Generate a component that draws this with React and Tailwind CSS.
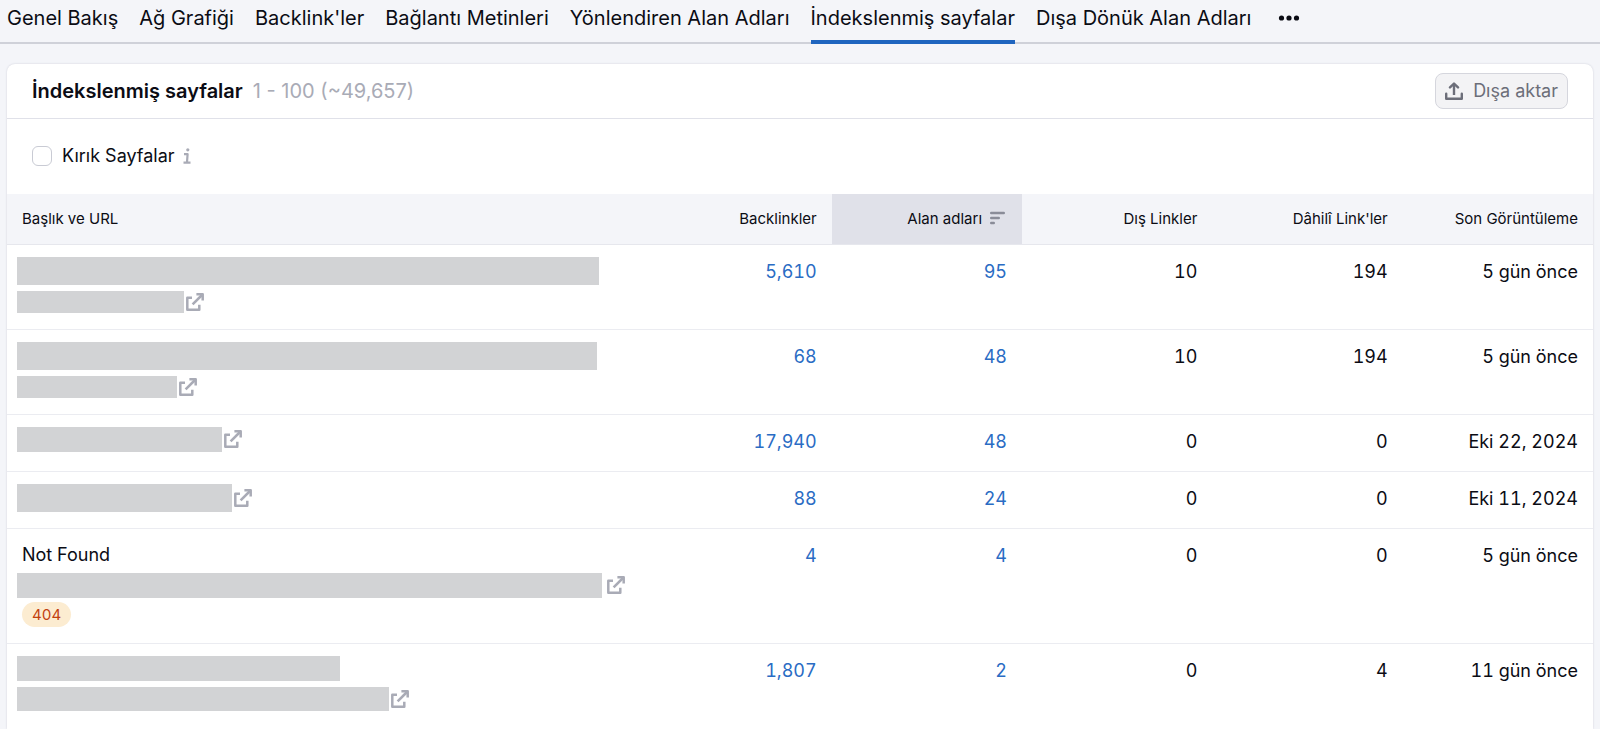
import React from 'react';

const TABS = [
  'Genel Bakış',
  'Ağ Grafiği',
  "Backlink'ler",
  'Bağlantı Metinleri',
  'Yönlendiren Alan Adları',
  'İndekslenmiş sayfalar',
  'Dışa Dönük Alan Adları',
];

const ACTIVE_TAB = 'İndekslenmiş sayfalar';

// title / url hold the size classes of the masked text blocks
const ROWS = [
  { id: 1, title: 'w-[582px] h-7', url: 'w-[167px] h-[22px]', backlinks: '5,610', domains: '95', external: '10', internal: '194', seen: '5 gün önce' },
  { id: 2, title: 'w-[580px] h-7', url: 'w-[160px] h-[22px]', backlinks: '68', domains: '48', external: '10', internal: '194', seen: '5 gün önce' },
  { id: 3, url: 'w-[205px] h-[25px]', backlinks: '17,940', domains: '48', external: '0', internal: '0', seen: 'Eki 22, 2024' },
  { id: 4, url: 'w-[215px] h-7', backlinks: '88', domains: '24', external: '0', internal: '0', seen: 'Eki 11, 2024' },
  { id: 5, name: 'Not Found', url: 'w-[585px] h-[25px] mr-[3px]', status: '404', backlinks: '4', domains: '4', external: '0', internal: '0', seen: '5 gün önce' },
  { id: 6, title: 'w-[323px] h-[25px]', url: 'w-[372px] h-6', backlinks: '1,807', domains: '2', external: '0', internal: '4', seen: '11 gün önce' },
];

function ExternalIcon() {
  return (
    <svg width="18" height="18" viewBox="0 0 18 18" fill="none" stroke="#a9abb6" strokeWidth="2.5">
      <path d="M6 4.7H1.3v12h12v-4.9" strokeLinejoin="round" />
      <path d="M10.4 1.3h6.3v6.3" strokeLinejoin="round" />
      <path d="M16 2 6.6 11.4" />
    </svg>
  );
}

function ExportIcon() {
  return (
    <svg width="18" height="18" viewBox="0 0 18 18" fill="none" stroke="#6c6e79" strokeWidth="2.4">
      <path d="M1.2 11.8v4.9h15.6v-4.9" strokeLinejoin="round" strokeLinecap="round" />
      <path d="M9 13V2" />
      <path d="M5 5.4 9 1.6l4 3.8" strokeLinejoin="round" strokeLinecap="round" />
    </svg>
  );
}

function SortIcon() {
  return (
    <svg width="17" height="16" viewBox="0 0 17 16" stroke="#8a8c98" strokeWidth="2.4" strokeLinecap="round">
      <path d="M1.2 2h12.6M1.2 7h7.6M1.2 12h2.6" />
    </svg>
  );
}

function InfoIcon() {
  return (
    <svg width="8" height="16" viewBox="0 0 8 16" fill="none" stroke="#a9abb6" strokeWidth="2.2">
      <path d="M1 6.2h3.6L4 14.2M.5 14.6h7" strokeLinejoin="round" />
      <circle cx="4.8" cy="1.8" r="1.6" fill="#a9abb6" stroke="none" />
    </svg>
  );
}

function PageCell({ row }) {
  return (
    <div className={`flex flex-col items-start ${row.name ? 'gap-1' : 'gap-1.5'}`}>
      {row.title && <div className={`bg-[#d2d3d5] ${row.title}`} />}
      {row.name && <div className="pl-[5px] leading-7">{row.name}</div>}
      <div className="flex items-center gap-0.5">
        <div className={`bg-[#d2d3d5] ${row.url}`} />
        <a href="#" aria-label="Sayfayı aç">
          <ExternalIcon />
        </a>
      </div>
      {row.status && (
        <span className="ml-[5px] rounded-full bg-[#fcecd1] px-2.5 text-[15px] leading-[25px] text-[#c2410f]">
          {row.status}
        </span>
      )}
    </div>
  );
}

export default function App() {
  return (
    <div className="flex h-screen flex-col overflow-hidden bg-[#f4f5f9] font-['Inter',sans-serif] text-[#0b0c14]">
      <nav className="flex shrink-0 gap-[21px] border-b-2 border-[#cfd1d9] pl-[7px] text-xl">
        {TABS.map((tab) => (
          <a
            key={tab}
            href="#"
            className={`-mb-0.5 whitespace-nowrap border-b-4 pt-1 pb-2 leading-7 ${
              tab === ACTIVE_TAB ? 'border-[#1f65bf]' : 'border-transparent'
            }`}
          >
            {tab}
          </a>
        ))}
        <button aria-label="Diğer" className="ml-1.5 flex h-9 items-center">
          <svg width="22" height="6" viewBox="0 0 22 6" fill="#0b0c14">
            <circle cx="3.5" cy="3" r="2.6" />
            <circle cx="11" cy="3" r="2.6" />
            <circle cx="18.5" cy="3" r="2.6" />
          </svg>
        </button>
      </nav>

      <section className="mx-[7px] mt-5 flex-1 rounded-t-lg bg-white shadow-[0_0_2px_#c9cbd6]">
        <header className="flex items-center justify-between border-b border-[#e0e1e9] px-[25px] py-[9px]">
          <h2 className="flex gap-2.5 text-xl">
            <span className="font-semibold">İndekslenmiş sayfalar</span>
            <span className="text-[#a9abb6]">1 - 100 (~49,657)</span>
          </h2>
          <button className="flex h-9 items-center gap-2.5 rounded-lg border border-[#d5d6dd] bg-[#f3f3f5] px-[9px] text-lg text-[#6c6e79]">
            <ExportIcon />
            Dışa aktar
          </button>
        </header>

        <div className="flex h-[75px] items-center gap-2 px-[25px] pb-0.5">
          <label className="flex items-center gap-2.5 text-lg">
            <input type="checkbox" className="size-5 appearance-none rounded-md border border-[#c9cbd4] bg-white" />
            Kırık Sayfalar
          </label>
          <InfoIcon />
        </div>

        <table className="w-full table-fixed text-lg">
          <thead>
            <tr className="border-b border-[#e6e7ed] bg-[#f4f5f9] text-right text-[15px] *:h-[50px] *:pr-[15px] *:font-normal">
              <th className="w-2/5 pl-[15px] text-left">Başlık ve URL</th>
              <th className="w-[12%]">Backlinkler</th>
              <th className="w-[12%] bg-[#e0e1e9]">
                <button className="inline-flex items-center gap-2">
                  Alan adları
                  <SortIcon />
                </button>
              </th>
              <th className="w-[12%]">Dış Linkler</th>
              <th className="w-[12%]">Dâhilî Link'ler</th>
              <th className="w-[12%]">Son Görüntüleme</th>
            </tr>
          </thead>
          <tbody>
            {ROWS.map((row) => (
              <tr
                key={row.id}
                className="border-b border-[#ebecf1] text-right align-top leading-7 tabular-nums last:border-0 *:pr-[15px]"
              >
                <td className="pt-3 pb-4 pl-2.5 text-left">
                  <PageCell row={row} />
                </td>
                <td className="pt-[13px] pb-[15px]">
                  <a href="#" className="text-[#2a6cc4]">{row.backlinks}</a>
                </td>
                <td className="pt-[13px] pb-[15px]">
                  <a href="#" className="text-[#2a6cc4]">{row.domains}</a>
                </td>
                <td className="pt-[13px] pb-[15px]">{row.external}</td>
                <td className="pt-[13px] pb-[15px]">{row.internal}</td>
                <td className="pt-[13px] pb-[15px]">{row.seen}</td>
              </tr>
            ))}
          </tbody>
        </table>
      </section>
    </div>
  );
}
